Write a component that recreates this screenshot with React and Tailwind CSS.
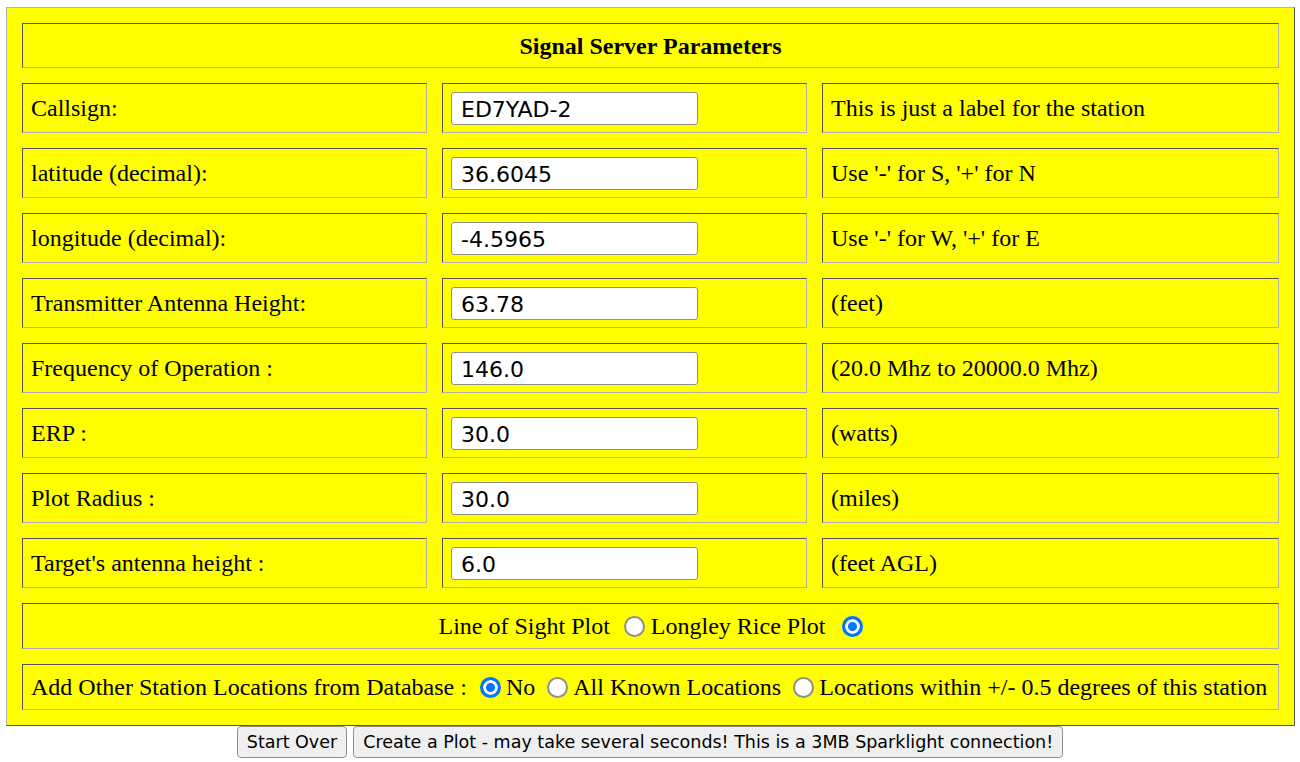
import { useState } from 'react'

const rows = [
    { label: 'Callsign:', value: 'ED7YAD-2', note: 'This is just a label for the station' },
    { label: 'latitude (decimal):', value: '36.6045', note: "Use '-' for S, '+' for N" },
    { label: 'longitude (decimal):', value: '-4.5965', note: "Use '-' for W, '+' for E" },
    { label: 'Transmitter Antenna Height:', value: '63.78', note: '(feet)' },
    { label: 'Frequency of Operation :', value: '146.0', note: '(20.0 Mhz to 20000.0 Mhz)' },
    { label: 'ERP :', value: '30.0', note: '(watts)' },
    { label: 'Plot Radius :', value: '30.0', note: '(miles)' },
    { label: "Target's antenna height :", value: '6.0', note: '(feet AGL)' },
]

const cell = 'border border-t-[#555] border-l-[#555] border-r-[#b0b0b0] border-b-[#b0b0b0] px-[8px] flex items-center whitespace-nowrap'

function Radio({ checked, onChange, className = '' }) {
    return (
        <button
            type="button"
            onClick={onChange}
            className={`w-[21px] h-[21px] shrink-0 rounded-full ${checked
                ? 'border-[3px] border-[#0075ff] bg-[#0075ff] shadow-[inset_0_0_0_3px_#fff]'
                : 'border-2 border-[#8f8f8f] bg-white'
                } ${className}`}
        />
    )
}

export default function App() {
    const [values, setValues] = useState(rows.map(r => r.value))
    const [plot, setPlot] = useState('longley')
    const [others, setOthers] = useState('no')

    return (
        <div className="font-['Liberation_Serif',serif] text-[24px] text-black">
            <div className="ml-[6px] mt-[7px] w-[1289px] bg-[#ffff00] border border-t-[#b0b0b0] border-l-[#b0b0b0] border-r-[#555] border-b-[#555] p-[15px]">
                <div className="grid grid-cols-[405px_365px_1fr] gap-[15px]">
                    {/* Title */}
                    <div className={`${cell} col-span-3 h-[45px] justify-center font-bold`}>
                        Signal Server Parameters
                    </div>

                    {rows.map((r, i) => (
                        <div key={r.label} className="contents">
                            <div className={`${cell} h-[50px]`}>{r.label}</div>
                            <div className={`${cell} h-[50px]`}>
                                <input
                                    type="text"
                                    value={values[i]}
                                    onChange={e => setValues(values.map((v, j) => j === i ? e.target.value : v))}
                                    className="w-[247px] h-[33px] bg-white border border-[#8f8f8f] rounded-[3px] pl-[9px] pt-[2px] font-['DejaVu_Sans',sans-serif] text-[22px] outline-none"
                                />
                            </div>
                            <div className={`${cell} h-[50px]`}>{r.note}</div>
                        </div>
                    ))}

                    {/* Plot type */}
                    <div className={`${cell} col-span-3 h-[46px] justify-center`}>
                        <span>Line of Sight Plot</span>
                        <Radio checked={plot === 'los'} onChange={() => setPlot('los')} className="ml-[14px] mr-[6px]" />
                        <span>Longley Rice Plot</span>
                        <Radio checked={plot === 'longley'} onChange={() => setPlot('longley')} className="ml-[16px]" />
                    </div>

                    {/* Other stations */}
                    <div className={`${cell} col-span-3 h-[46px]`}>
                        <span>Add Other Station Locations from Database :</span>
                        <Radio checked={others === 'no'} onChange={() => setOthers('no')} className="ml-[13px] mr-[5px]" />
                        <span>No</span>
                        <Radio checked={others === 'all'} onChange={() => setOthers('all')} className="ml-[12px] mr-[5px]" />
                        <span>All Known Locations</span>
                        <Radio checked={others === 'near'} onChange={() => setOthers('near')} className="ml-[12px] mr-[5px]" />
                        <span>Locations within +/- 0.5 degrees of this station</span>
                    </div>
                </div>
            </div>

            <div className="flex justify-center gap-[6px] mt-0 font-['DejaVu_Sans',sans-serif] text-[17.5px]">
                <button className="h-[32px] px-[9px] bg-[#efefef] border border-[#8f8f8f] rounded-[4px]">Start Over</button>
                <button className="h-[32px] px-[9px] bg-[#efefef] border border-[#8f8f8f] rounded-[4px]">
                    Create a Plot - may take several seconds! This is a 3MB Sparklight connection!
                </button>
            </div>
        </div>
    )
}
